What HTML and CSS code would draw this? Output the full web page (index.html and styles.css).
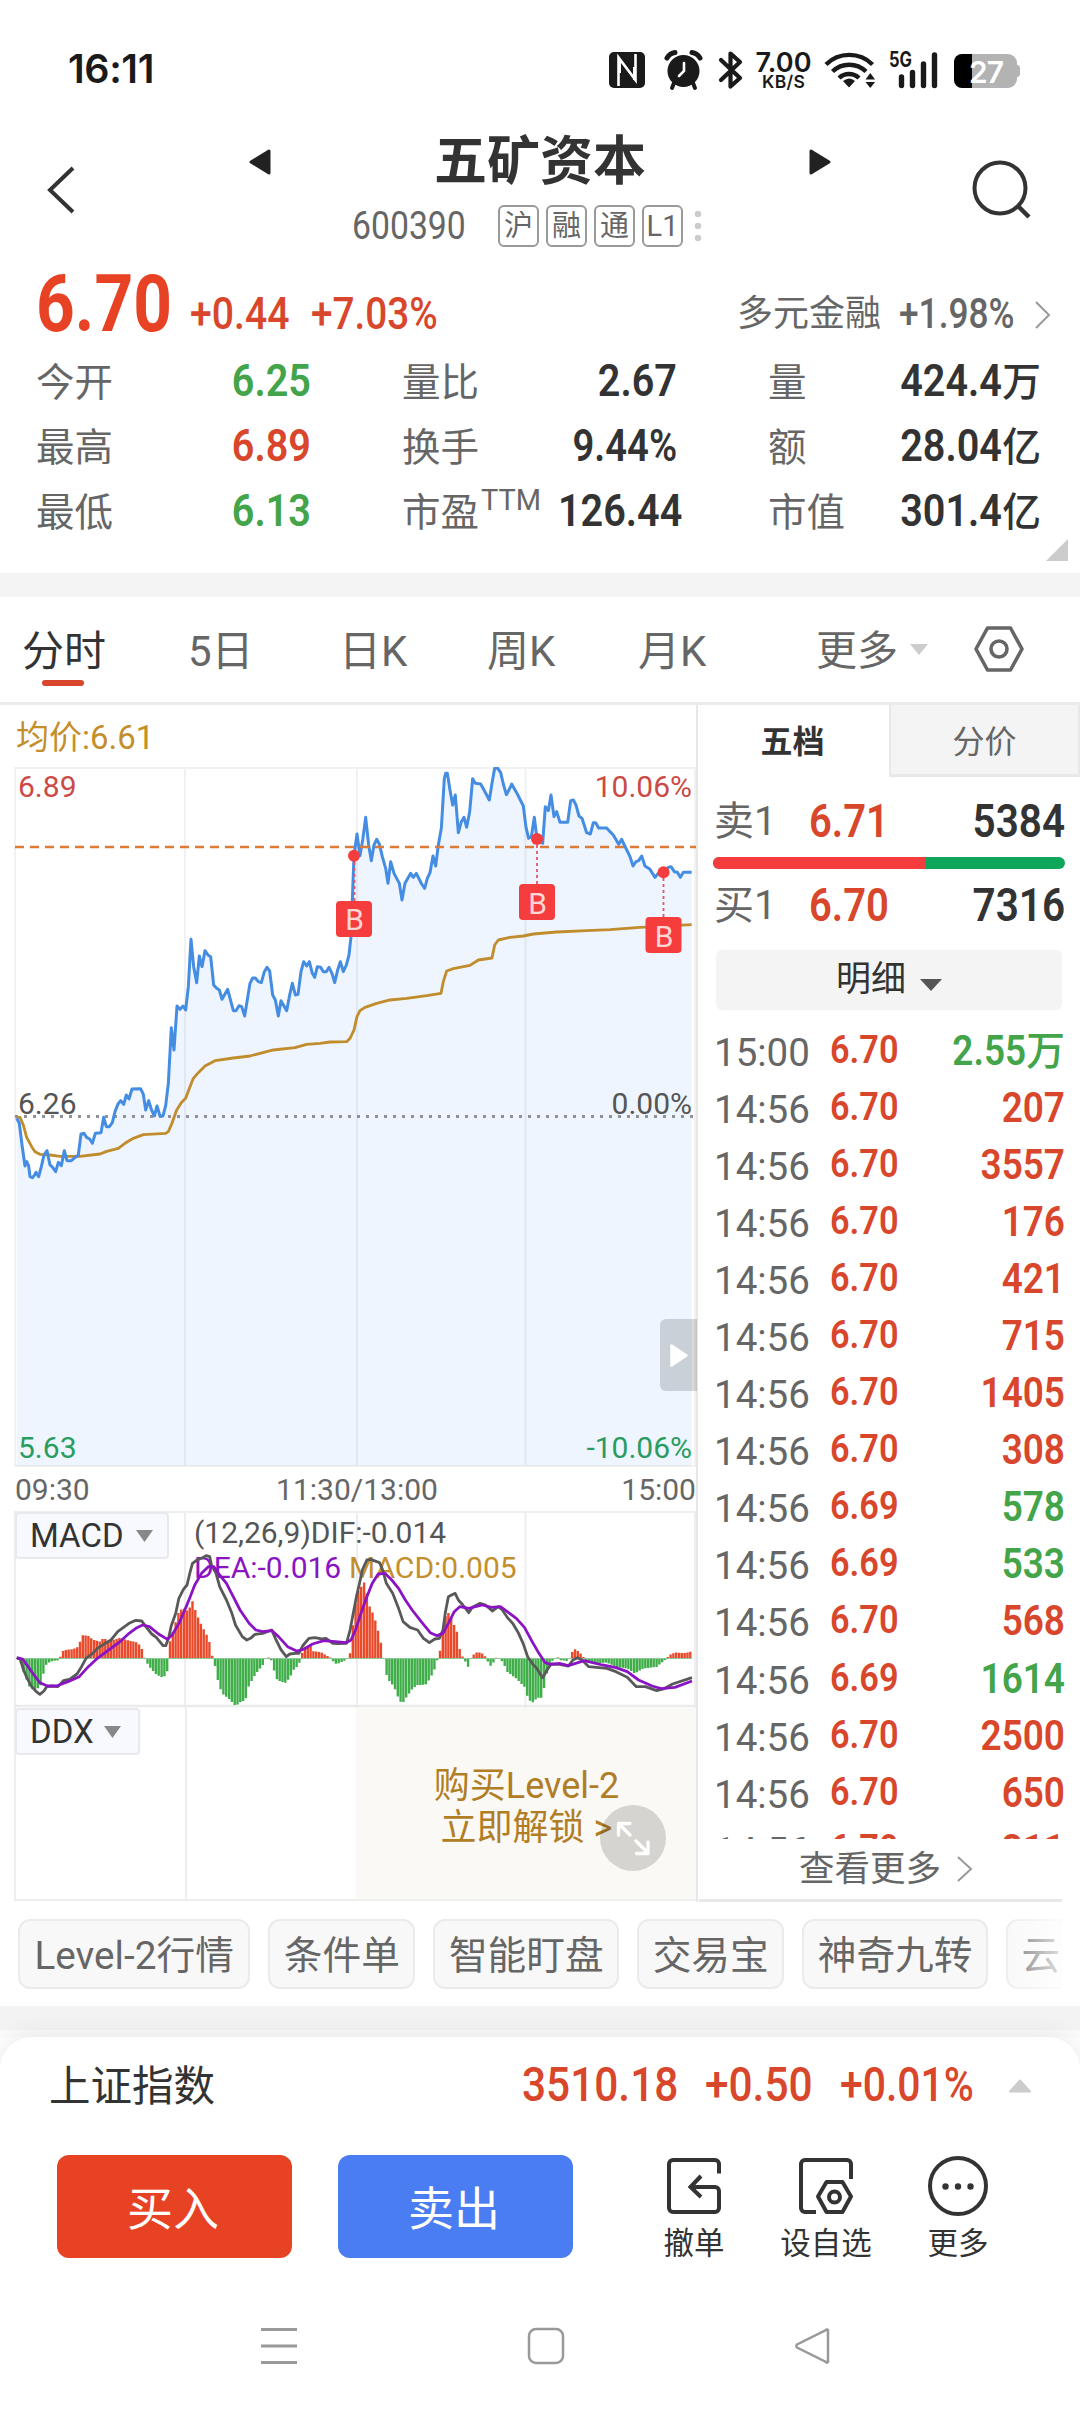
FILE: index.html
```html
<!DOCTYPE html>
<html lang="zh-CN">
<head>
<meta charset="utf-8">
<title>五矿资本 600390</title>
<link rel="stylesheet" href="styles.css">
</head>
<body>
<div class="status">
  <span class="clock">16:11</span>
  <svg class="status-icons" width="420" height="44" viewBox="605 48 420 44">
    <rect x="609" y="52" width="36" height="36" rx="5" fill="#1a1a1a"/>
    <path d="M618.500 86V57.500l17 22.500V54" fill="none" stroke="#fff" stroke-width="2.600"/>
    <path d="M620 60v13M634 67v13" stroke="#fff" stroke-width="2"/>
    <circle cx="683.500" cy="71" r="16" fill="#1a1a1a"/>
    <path d="M667 58q3-5 8-5.500M700 58q-3-5-8-5.500" fill="none" stroke="#1a1a1a" stroke-width="5" stroke-linecap="round"/>
    <path d="M674 83l-2 5M693 83l2 5" stroke="#1a1a1a" stroke-width="4" stroke-linecap="round"/>
    <path d="M684 63v8l-5 5" fill="none" stroke="#fff" stroke-width="2.600" stroke-linecap="round"/>
    <path d="M721 60l19 18-9.500 8.500V53.500L740 62l-19 18" fill="none" stroke="#1a1a1a" stroke-width="4.200" stroke-linejoin="round" stroke-linecap="round"/>
    <text x="755.500" y="71.500" class="net-speed" textLength="56">7.00</text>
    <text x="762" y="88" class="net-unit" textLength="43">KB/S</text>
    <g fill="none" stroke="#1a1a1a" stroke-width="4.400">
      <path d="M826 64.500a33 33 0 0 1 46.500 0"/>
      <path d="M832.500 71.500a24 24 0 0 1 33.500 0"/>
      <path d="M839 78a14.500 14.500 0 0 1 20 0"/>
    </g>
    <path d="M843 81q6.500-5 12 0l-6 6.500z" fill="#1a1a1a"/>
    <path d="M865.500 79.500l4.800-6.500 4.800 6.500zM865.500 82l4.800 6 4.800-6z" fill="#1a1a1a"/>
    <text x="889" y="67" class="net-gen" textLength="23" lengthAdjust="spacingAndGlyphs">5G</text>
    <g stroke="#1a1a1a" stroke-width="5.400" stroke-linecap="round">
      <path d="M901.500 77v8.500M912.500 72.500v13M923.500 64v21.500M934.500 55v30.500"/>
    </g>
    <rect x="954" y="54" width="63" height="34" rx="9" fill="#b3b3b3"/>
    <rect x="1014" y="65" width="6" height="12" rx="3" fill="#b3b3b3"/>
    <path d="M972 54h-10a8 8 0 0 0-8 8v18a8 8 0 0 0 8 8h10z" fill="#000"/>
    <text x="969" y="82.500" class="batt" textLength="35">27</text>
  </svg>
</div>

<header class="header">
  <svg class="back" width="34" height="54" viewBox="0 0 34 54"><path d="M28 5L5 27l23 22" fill="none" stroke="#333" stroke-width="4"/></svg>
  <div class="title-block">
    <div class="title-row">
      <svg width="22" height="26" viewBox="0 0 22 26"><path d="M20 2v22L2 13z" fill="#222" stroke="#222" stroke-width="3" stroke-linejoin="round"/></svg>
      <h1>五矿资本</h1>
      <svg width="22" height="26" viewBox="0 0 22 26"><path d="M2 2v22l18-11z" fill="#222" stroke="#222" stroke-width="3" stroke-linejoin="round"/></svg>
    </div>
    <div class="code-row">
      <span class="code"><span class="din left">600390</span></span>
      <span class="tag">沪</span><span class="tag">融</span><span class="tag">通</span><span class="tag">L1</span>
      <svg width="8" height="32" viewBox="0 0 8 32" fill="#ccc"><circle cx="4" cy="4" r="3.200"/><circle cx="4" cy="16" r="3.200"/><circle cx="4" cy="28" r="3.200"/></svg>
    </div>
  </div>
  <svg class="search" width="62" height="62" viewBox="0 0 62 62"><circle cx="29" cy="29" r="25.500" fill="none" stroke="#333" stroke-width="4"/><path d="M47 47l11 11" stroke="#333" stroke-width="4.500"/></svg>
</header>

<section class="quote">
  <div class="price-row">
    <span class="price red"><span class="din left">6.70</span></span>
    <span class="chg red"><span class="din left">+0.44</span></span>
    <span class="pct red"><span class="din left">+7.03%</span></span>
    <span class="sector">多元金融</span>
    <span class="sector-pct"><span class="din right">+1.98%</span></span>
    <svg class="more" width="16" height="28" viewBox="0 0 16 28"><path d="M1 1l13 13L1 27" fill="none" stroke="#999" stroke-width="2"/></svg>
  </div>
  <div class="stats">
    <div class="stat"><span>今开</span><b class="green din right">6.25</b></div>
    <div class="stat"><span>量比</span><b class="din right">2.67</b></div>
    <div class="stat"><span>量</span><b class="din right">424.4<i>万</i></b></div>
    <div class="stat"><span>最高</span><b class="red din right">6.89</b></div>
    <div class="stat"><span>换手</span><b class="din right tight">9.44%</b></div>
    <div class="stat"><span>额</span><b class="din right">28.04<i>亿</i></b></div>
    <div class="stat"><span>最低</span><b class="green din right">6.13</b></div>
    <div class="stat"><span>市盈<sup>TTM</sup></span><b class="din right">126.44</b></div>
    <div class="stat"><span>市值</span><b class="din right">301.4<i>亿</i></b></div>
  </div>
  <svg class="corner" width="22" height="22" viewBox="0 0 22 22"><path d="M22 0v22H0z" fill="#ccc"/></svg>
</section>

<nav class="periods">
  <span class="on">分时</span><span>5日</span><span>日K</span><span>周K</span><span>月K</span><span class="menu">更多</span>
  <svg class="caret" width="18" height="12" viewBox="0 0 18 12"><path d="M0 0h18L9 11z" fill="#ccc"/></svg>
  <svg class="gear" width="50" height="48" viewBox="0 0 50 48" fill="none" stroke="#666" stroke-width="3.600"><path d="M13.500 3h23L48 24 36.500 45h-23L2 24z" stroke-linejoin="round"/><circle cx="25" cy="24" r="8"/></svg>
</nav>

<main class="board">
  <div class="charts">
    <div class="avg">均价:6.61</div>
    <svg class="price-chart" width="697" height="700" viewBox="0 767 697 700">
      <g transform="translate(0 740) scale(.33333)">
        <path id="area" fill="#eef5fe" d=""/>
      </g>
      <g fill="none" stroke="#000" stroke-opacity=".055" stroke-width="2">
        <path d="M15 768H695V1466H15zM185 768V1466M357 768V1466M525.500 768V1466"/>
      </g>
      <path d="M15 1116.500H694" stroke="#8e9298" stroke-width="3" stroke-dasharray="3 6"/>
      <g transform="translate(0 740) scale(.33333)" fill="none" stroke-linejoin="round">
        <polyline stroke="#c18c2c" stroke-width="8.500" points="50,1132 60,1132 70,1155 80,1192 95,1220 105,1235 120,1243 150,1245 180,1249 240,1249 300,1242 320,1234 355,1225 375,1210 400,1195 430,1184 497,1180 505,1175 515,1152 530,1110 545,1087 557,1075 570,1040 580,1015 595,998 615,978 645,962 700,954 750,948 780,940 820,930 885,923 920,913 960,910 990,906 1040,905 1050,895 1062,870 1071,830 1080,812 1095,802 1130,790 1170,780 1220,775 1280,767 1323,760 1330,725 1340,693 1360,686 1410,676 1435,660 1476,654 1484,615 1495,600 1530,592 1570,588 1600,582 1670,576 1760,572 1830,569 1920,562 2075,554"/>
        <polyline id="line" stroke="#458de3" stroke-width="9" points="50,1135 58,1150 66,1215 75,1278 80,1265 86,1278 90,1310 97,1313 104,1305 108,1297 116,1310 124,1280 132,1245 141,1232 150,1275 158,1282 167,1295 175,1267 184,1277 193,1232 201,1262 214,1262 222,1255 235,1245 243,1182 252,1180 260,1192 269,1197 277,1210 286,1180 303,1178 311,1132 319,1160 328,1160 337,1148 345,1115 354,1092 362,1082 371,1093 379,1065 387,1077 396,1047 422,1046 430,1063 437,1110 446,1082 454,1108 463,1128 471,1098 480,1128 489,1128 497,1097 505,1030 514,863 522,930 531,798 540,808 549,798 557,810 565,740 573,598 581,680 590,728 598,648 606,680 615,632 624,645 632,650 641,735 650,745 658,750 666,778 683,748 700,812 708,812 717,797 725,800 734,828 750,730 758,714 766,714 775,725 784,728 793,695 801,682 809,693 818,765 826,780 835,828 843,782 860,812 869,765 877,730 886,765 894,763 903,695 911,665 920,678 928,665 937,700 944,712 952,680 962,682 970,695 979,695 987,682 996,700 1004,728 1013,690 1021,665 1030,695 1039,675 1047,645 1053,590 1060,400 1062,347 1071,282 1080,347 1088,300 1097,232 1106,315 1114,362 1122,315 1130,298 1138,312 1147,350 1157,385 1164,430 1172,365 1182,400 1198,430 1206,480 1215,430 1232,400 1240,412 1249,400 1265,432 1274,445 1282,415 1290,398 1299,348 1307,378 1315,315 1324,265 1333,115 1337,100 1342,100 1350,150 1358,195 1366,165 1375,278 1384,245 1392,232 1400,262 1409,215 1418,116 1426,130 1442,132 1452,150 1468,180 1476,130 1484,85 1492,83 1502,98 1510,132 1519,164 1527,150 1535,132 1552,162 1561,180 1570,198 1578,262 1586,295 1594,290 1603,232 1611,297 1628,310 1636,200 1645,212 1653,165 1662,230 1670,215 1680,247 1703,247 1712,182 1720,180 1728,195 1737,228 1746,235 1760,278 1771,282 1780,248 1787,248 1796,264 1820,264 1830,275 1840,285 1856,313 1865,298 1873,315 1890,350 1899,378 1908,365 1916,362 1925,348 1935,378 1950,388 1965,412 1975,400 1990,397 2005,382 2013,380 2023,395 2032,397 2041,412 2050,397 2075,397"/>
      </g>
      <path d="M15 847H696" stroke="#dd7a35" stroke-width="2.400" stroke-dasharray="9 6"/>
      <g stroke="#e0566a" stroke-dasharray="3 3" stroke-width="1.800"><path d="M354.500 862V901"/><path d="M537 845V884M663.500 878V917"/></g>
      <g fill="#f53d3d"><circle cx="354" cy="855.700" r="6"/><circle cx="537" cy="839" r="6"/><circle cx="663.500" cy="872.300" r="6"/>
        <rect x="336" y="901" width="36" height="36" rx="4"/><rect x="519" y="884" width="36" height="36" rx="4"/><rect x="645.500" y="917" width="36" height="36" rx="4"/></g>
      <g class="mark"><text x="354.500" y="930">B</text><text x="537.500" y="913.500">B</text><text x="664" y="946.500">B</text></g>
      <g class="axis">
        <text x="18" y="797" fill="#cb4a45">6.89</text><text x="692" y="797" fill="#cb4a45" class="end">10.06%</text>
        <text x="18" y="1113.500" fill="#555">6.26</text><text x="692" y="1113.500" fill="#555" class="end">0.00%</text>
        <text x="18" y="1457.500" fill="#2a9c60">5.63</text><text x="692" y="1457.500" fill="#2a9c60" class="end">-10.06%</text>
      </g>
      <path d="M697 1319h-31a6 6 0 0 0-6 6v60a6 6 0 0 0 6 6h31z" fill="#000" fill-opacity=".15"/>
      <path d="M671.500 1345.500v20l15-10z" fill="#fff" stroke="#fff" stroke-width="2.500" stroke-linejoin="round"/>
    </svg>
    <div class="times"><span>09:30</span><span>11:30/13:00</span><span>15:00</span></div>
    <div class="sub">
      <svg width="697" height="197" viewBox="0 1511 697 197">
        <path d="M15 1708V1512H695V1708M185 1512V1708M357 1512V1708M525.500 1512V1708" fill="none" stroke="#eee" stroke-width="2"/>
        <path d="M15 1706H696" stroke="#ebebeb" stroke-width="2.500"/>
        <g id="bars"></g>
        <path d="M16 1658.500H692" stroke="#8fc99a" stroke-width="1"/>
        <g class="axis"><text x="194" y="1542.500" fill="#555">(12,26,9)DIF:-0.014</text><text x="194" y="1577.500" fill="#8a14c4">DEA:-0.016</text><text x="349" y="1577.500" fill="#c48e2c">MACD:0.005</text></g>
        <g class="curves" transform="translate(0 1490) scale(.4529 .33333)">
          <polyline stroke="#595959" points="37,503 45,508 52,540 60,565 70,590 80,605 88,613 97,603 103,590 115,588 128,590 140,572 155,567 170,552 180,530 190,505 205,490 215,475 230,462 245,450 260,425 275,410 285,400 300,391 313,393 322,410 335,432 345,442 360,467 366,467 373,440 378,408 388,370 395,325 405,298 413,285 420,245 425,220 435,210 448,203 455,197 463,200 467,225 477,250 485,290 500,330 512,370 520,405 535,440 545,450 553,445 563,433 580,430 590,425 600,420 608,445 620,478 632,500 640,492 652,490 660,490 668,468 682,445 695,443 710,447 720,445 735,460 745,461 765,460 773,420 780,370 787,320 793,285 800,240 810,210 818,208 838,218 845,240 853,280 867,310 880,355 890,395 905,412 922,420 935,445 948,458 960,447 970,445 978,420 983,370 990,320 998,314 1005,310 1012,330 1022,345 1035,368 1043,352 1060,340 1072,345 1087,363 1100,350 1108,358 1120,382 1132,400 1145,430 1155,460 1165,500 1175,520 1185,535 1198,563 1208,540 1217,522 1235,523 1255,528 1265,510 1275,503 1285,510 1300,530 1340,535 1360,545 1385,562 1405,590 1425,590 1450,602 1465,597 1485,582 1528,563"/>
          <polyline stroke="#8a14c4" points="37,503 50,507 62,530 75,555 88,578 105,588 125,588 150,575 175,560 195,530 215,505 240,480 265,455 285,430 300,415 315,405 330,410 350,432 370,448 380,435 395,400 408,360 420,320 430,285 445,250 460,230 472,230 485,255 500,280 515,320 530,360 550,400 565,420 580,425 600,422 615,440 635,470 655,483 670,478 690,462 715,452 740,455 765,458 775,450 785,420 797,370 810,320 822,280 835,252 850,250 865,270 880,295 895,330 910,360 930,395 950,428 965,437 978,430 990,400 1003,365 1015,350 1035,355 1065,345 1085,352 1105,350 1120,365 1140,385 1158,412 1175,455 1190,490 1203,517 1215,523 1235,520 1255,527 1290,512 1330,525 1360,533 1385,545 1410,570 1440,588 1460,596 1490,592 1528,573"/>
        </g>
      </svg>
      <button class="pick macd">MACD<svg width="17" height="12" viewBox="0 0 17 12"><path d="M0 0h17L8.500 12z" fill="#888"/></svg></button>
    </div>
    <div class="sub ddx-pane">
      <div class="lock">购买Level-2<br>立即解锁 &gt;</div>
      <button class="pick ddx">DDX<svg width="17" height="12" viewBox="0 0 17 12"><path d="M0 0h17L8.500 12z" fill="#888"/></svg></button>
      <svg class="expand" width="66" height="66" viewBox="0 0 66 66"><circle cx="33" cy="33" r="33" fill="#000" fill-opacity=".15"/><path d="M18.500 30V18.500H30M19 19l11 11M48 37v11.500H36.500M36 36l12 12" fill="none" stroke="#fff" stroke-width="3.400" stroke-linecap="round" stroke-linejoin="round"/></svg>
    </div>
  </div>

  <aside class="depth">
    <div class="depth-tabs"><b>五档</b><span>分价</span></div>
    <div class="level ask"><span>卖1</span><b class="din left red">6.71</b><b class="din right">5384</b></div>
    <div class="ratio"><i></i></div>
    <div class="level bid"><span>买1</span><b class="din left red">6.70</b><b class="din right">7316</b></div>
    <div class="detail">明细<svg width="22" height="12" viewBox="0 0 22 12"><path d="M0 0h22L11 12z" fill="#555"/></svg></div>
    <div class="ticks">
      <div><span>15:00</span><b class="din left red">6.70</b><em class="din right green">2.55<i>万</i></em></div>
      <div><span>14:56</span><b class="din left red">6.70</b><em class="din right red">207</em></div>
      <div><span>14:56</span><b class="din left red">6.70</b><em class="din right red">3557</em></div>
      <div><span>14:56</span><b class="din left red">6.70</b><em class="din right red">176</em></div>
      <div><span>14:56</span><b class="din left red">6.70</b><em class="din right red">421</em></div>
      <div><span>14:56</span><b class="din left red">6.70</b><em class="din right red">715</em></div>
      <div><span>14:56</span><b class="din left red">6.70</b><em class="din right red">1405</em></div>
      <div><span>14:56</span><b class="din left red">6.70</b><em class="din right red">308</em></div>
      <div><span>14:56</span><b class="din left red">6.69</b><em class="din right green">578</em></div>
      <div><span>14:56</span><b class="din left red">6.69</b><em class="din right green">533</em></div>
      <div><span>14:56</span><b class="din left red">6.70</b><em class="din right red">568</em></div>
      <div><span>14:56</span><b class="din left red">6.69</b><em class="din right green">1614</em></div>
      <div><span>14:56</span><b class="din left red">6.70</b><em class="din right red">2500</em></div>
      <div><span>14:56</span><b class="din left red">6.70</b><em class="din right red">650</em></div>
      <div><span>14:56</span><b class="din left red">6.70</b><em class="din right red">311</em></div>
    </div>
    <div class="see-more">查看更多<svg width="16" height="26" viewBox="0 0 16 26"><path d="M1 1l13 12L1 25" fill="none" stroke="#999" stroke-width="2"/></svg></div>
  </aside>
</main>

<div class="chips"><span>Level-2行情</span><span>条件单</span><span>智能盯盘</span><span>交易宝</span><span>神奇九转</span><span>云参数</span></div>
<div class="band"></div>

<footer class="sheet">
  <div class="index">
    <span class="name">上证指数</span>
    <span class="v1"><span class="din left">3510.18</span></span><span class="v2"><span class="din left">+0.50</span></span><span class="v3"><span class="din left">+0.01%</span></span>
    <svg width="24" height="14" viewBox="0 0 24 14"><path d="M12 1.500L22 12.500H2z" fill="#ccc" stroke="#ccc" stroke-width="2" stroke-linejoin="round"/></svg>
  </div>
  <div class="actions">
    <button class="buy">买入</button><button class="sell">卖出</button>
    <div class="act"><svg width="60" height="62" viewBox="0 0 60 62" fill="none" stroke="#333" stroke-width="4"><path d="M55 18.500V9a4 4 0 0 0-4-4H9a4 4 0 0 0-4 4v44a4 4 0 0 0 4 4h42a4 4 0 0 0 4-4V36a4 4 0 0 0-4-4H28M37 21L26.500 32 37 42"/></svg>撤单</div>
    <div class="act"><svg width="60" height="62" viewBox="0 0 60 62" fill="none" stroke="#333" stroke-width="4"><path d="M55 24V9a4 4 0 0 0-4-4H9a4 4 0 0 0-4 4v44a4 4 0 0 0 4 4h11"/><path d="M30.500 27h16L55 41.500 46.500 57h-16L22 41.500z" stroke-linejoin="round"/><circle cx="38.500" cy="42" r="5.500"/></svg>设自选</div>
    <div class="act"><svg width="62" height="62" viewBox="0 0 62 62"><circle cx="31" cy="31" r="28" fill="none" stroke="#333" stroke-width="4"/><g fill="#333"><circle cx="18.500" cy="31.500" r="3.200"/><circle cx="31" cy="31.500" r="3.200"/><circle cx="43.500" cy="31.500" r="3.200"/></g></svg>更多</div>
  </div>
  <div class="sysnav">
    <svg width="38" height="38" viewBox="0 0 38 38"><path d="M1 2.500h36M1 19h36M1 35.500h36" stroke="#999" stroke-width="3"/></svg>
    <svg width="38" height="38" viewBox="0 0 38 38"><rect x="2" y="2" width="34" height="34" rx="7" fill="none" stroke="#999" stroke-width="2.500"/></svg>
    <svg width="38" height="38" viewBox="0 0 38 38"><path d="M34 4v30a1 1 0 0 1-2 1L3 20.500a2 2 0 0 1 0-3L32 3a1 1 0 0 1 2 1z" fill="none" stroke="#999" stroke-width="2.500"/></svg>
  </div>
</footer>
<script src="chart.js"></script>
</body>
</html>
```
FILE: styles.css
```css
* { box-sizing: border-box; }
body { margin: 0; width: 1080px; height: 2412px; overflow: hidden; background: #fff; color: #333; font-family: Roboto, "Noto Sans CJK SC", sans-serif; }
svg { display: block; flex: none; }
b, em, i { font-style: normal; }
button { font: inherit; }
.din { display: inline-block; font-weight: 600; transform: scaleX(.88); white-space: nowrap; }
.din.left { transform-origin: 0 50%; }
.din.right { transform-origin: 100% 50%; }
.din.tight { transform: scaleX(.85); }
.din i { display: inline-block; font-weight: 500; font-size: 40px; transform: scaleX(1.1); transform-origin: 100% 50%; margin-left: 4px; }
.red { color: #d8462b; }
.green { color: #43a44a; }

.status { height: 110px; padding: 30px 55px 0 68px; display: flex; align-items: center; justify-content: space-between; }
.clock { font: 600 39.500px/1 Inter, sans-serif; color: #1a1a1a; letter-spacing: -.4px; }
.status-icons { overflow: visible; }
.status-icons text { font-family: Inter, sans-serif; font-weight: 600; fill: #1a1a1a; }
.status-icons .net-speed { font-size: 27px; }
.status-icons .net-unit { font-size: 17.500px; }
.status-icons .net-gen { font-size: 21px; font-weight: 700; }
.status-icons .batt { font-size: 30px; fill: #fff; }

.header { height: 137px; display: grid; grid-template-columns: 249px 582px 1fr; }
.back { margin: 53px 0 0 45px; }
.title-row { height: 95px; display: flex; align-items: center; justify-content: space-between; padding-top: 8px; }
h1 { margin: 0; font-size: 53px; line-height: 60px; font-weight: 700; }
.code-row { height: 42px; padding-left: 103px; display: flex; align-items: center; gap: 7px; }
.code { width: 139px; font-size: 39px; line-height: 42px; color: #666; }
.code .din { font-weight: 400; transform: scaleX(.865); }
.tag { width: 41px; height: 42px; border: 2px solid #999; border-radius: 6px; font-size: 29px; line-height: 38px; text-align: center; color: #666; }
.code-row svg { margin-left: 4px; }
.search { margin: 49px 0 0 140px; }

.quote { height: 350px; position: relative; border-bottom: 24px solid #f4f4f4; }
.price-row { height: 102px; padding-left: 36px; display: flex; line-height: 50px; padding-top: 42px; white-space: nowrap; }
.price { width: 154px; font-size: 80px; margin-top: -10px; }
.price .din { font-weight: 700; color: #e84224; transform: scaleX(.845); }
.chg { width: 121px; font-size: 44.500px; }
.pct { width: 426px; font-size: 44.500px; }
.chg .din { font-weight: 500; }
.pct .din { font-weight: 500; transform: scaleX(.87); }
.sector { width: 146px; font-size: 36px; color: #666; }
.sector-pct { width: 132px; display: flex; justify-content: flex-end; font-size: 42px; color: #666; }
.sector-pct .din { font-weight: 500; transform: scaleX(.84); }
.more { margin: 12px 0 0 20px; }
.stats { padding-left: 36px; display: grid; grid-template-columns: 275px 275px 273px; column-gap: 91px; grid-auto-rows: 65px; line-height: 68px; }
.stat { display: flex; justify-content: space-between; font-size: 38.500px; color: #666; white-space: nowrap; }
.stat b { font-size: 45px; line-height: 64px; color: #333; }
.stat b.red { color: #d8462b; }
.stat b.green { color: #43a44a; }
.stat sup { font-size: 29px; line-height: 0; vertical-align: 16px; margin-left: 2px; }
.corner { position: absolute; right: 12px; bottom: 12px; }

.periods { height: 108px; padding: 0 0 3px 22px; border-bottom: 3px solid #ebebeb; display: flex; align-items: center; font-size: 42px; line-height: 111px; color: #666; }
.periods span { width: 148px; height: 105px; position: relative; }
.periods span:nth-child(1) { width: 166px; }
.periods span:nth-child(2) { width: 151px; }
.periods span:nth-child(4) { width: 151px; }
.periods span:nth-child(5) { width: 178px; }
.periods span.menu { width: 94px; font-size: 41px; }
.periods .on { color: #333; }
.periods .on::after { content: ""; position: absolute; left: 20px; top: 84px; width: 42px; height: 6px; border-radius: 3px; background: #d8462b; }
.caret { margin-top: 3px; }
.gear { margin: 1px 0 0 46px; }

.board { display: flex; height: 1197px; }
.charts { width: 698px; border-right: 2px solid #e8e8e8; }
.avg { height: 62px; padding-left: 16px; font-size: 33px; line-height: 65px; color: #c48e2c; }
.axis text, .mark text { font-family: Roboto, sans-serif; font-size: 30px; }
.axis .end { text-anchor: end; }
.mark text { font-size: 30px; fill: #ffd5d5; text-anchor: middle; }
.times { height: 44px; padding: 0 0 0 15px; display: flex; justify-content: space-between; font-size: 30px; line-height: 46px; color: #666; }
.times span:nth-child(2) { margin-left: 3px; }
.sub { position: relative; height: 197px; }
.sub > svg { max-width: none; }
.curves polyline { fill: none; stroke-width: 2.800px; vector-effect: non-scaling-stroke; stroke-linejoin: round; }
.pick { position: absolute; left: 15px; top: 1px; height: 47px; padding: 0 0 0 13px; background: #f8f9fe; border: 2px solid #e8e9ec; border-radius: 4px; display: flex; align-items: center; gap: 12px; font-size: 33px; color: #333; }
.macd { width: 154px; }
.ddx { width: 125px; gap: 10px; top: 0; }
.ddx-pane { height: 193px; border: 2px solid #eee; border-width: 0 0 2px 2px; margin-left: 14px; background: linear-gradient(90deg, transparent 169px, #eee 169px, #eee 171px, transparent 171px); }
.ddx-pane .pick { left: -1px; }
.lock { margin-left: 340px; height: 191px; padding: 57px 0 0 1px; background: #fbf9f5; color: #b17d25; font-size: 36px; line-height: 42px; text-align: center; }
.expand { position: absolute; left: 584px; top: 97px; }

.depth { flex: 1; padding-left: 1px; }
.depth-tabs { height: 72px; display: flex; font-size: 32px; line-height: 74px; text-align: center; }
.depth-tabs b { width: 190px; padding-right: 3px; }
.depth-tabs span { flex: 1; background: #f4f4f4; border: 2px solid #e8e8e8; border-width: 0 2px 3px; color: #666; }
.level { height: 66px; margin: 0 15px; display: grid; grid-template-columns: 95px 1fr auto; line-height: 67px; font-size: 40px; color: #666; }
.level b { font-size: 46px; color: #333; }
.level b.red { color: #d8462b; transform: scaleX(.87); }
.ask { margin-top: 11px; }
.ratio { height: 12px; margin: 3px 15px 0 14px; border-radius: 6px; overflow: hidden; background: #0ea65b; }
.ratio i { display: block; width: 60.300%; height: 12px; background: #f53d3d; }
.bid { margin-top: 3px; }
.detail { height: 60px; margin: 12px 18px 0 17px; border-radius: 6px; background: #f4f4f4; display: flex; align-items: center; justify-content: center; gap: 14px; font-size: 35px; line-height: 66px; }
.detail svg { margin-top: 10px; }
.ticks { height: 829px; margin: 0 15px; overflow: hidden; padding-top: 11px; }
.ticks div { height: 57.050px; line-height: 57.050px; display: grid; grid-template-columns: 116px 1fr auto; font-size: 38.500px; color: #666; }
.ticks span { padding-top: 3px; }
.ticks b { font-size: 39px; padding-top: 1px; }
.ticks em { font-size: 42px; padding-top: 1px; }
.ticks i { font-size: 40px; }
.see-more { height: 63px; margin-right: 18px; border-bottom: 3px solid #e8e8e8; display: flex; align-items: center; justify-content: center; gap: 16px; padding-left: 11px; font-size: 35.500px; line-height: 64px; color: #666; }

.chips { height: 104px; width: 1062px; padding: 17px 0 0 18px; display: flex; gap: 18px; overflow: hidden; position: relative; }
.chips span { flex: none; height: 70px; padding: 0 13.500px; border: 2px solid #ebebeb; border-radius: 12px; background: #f8f8f8; font-size: 38.700px; line-height: 69px; color: #666; }
.chips span:first-child { padding: 0 14.500px; }
.chips::after { content: ""; position: absolute; right: 0; top: 0; width: 70px; height: 104px; background: linear-gradient(90deg, #fff0, #fffc); }
.band { height: 31px; background: #f3f3f3; border-bottom: 7px solid #fbfbfb; }

.sheet { height: 375px; background: #fff; border-radius: 32px 32px 0 0; box-shadow: 0 0 24px rgba(0, 0, 0, .1); position: relative; }
.index { height: 98px; padding-left: 49px; display: flex; align-items: center; font-size: 41.500px; line-height: 100px; }
.index .name { width: 473px; padding-top: 1px; }
.index .din { font-weight: 500; font-size: 49px; color: #d8462b; transform: scaleX(.865); }
.index .v3 .din { transform: scaleX(.835); }
.v1 { width: 183px; } .v2 { width: 135px; } .v3 { width: 168px; }
.actions { height: 140px; padding: 20px 0 0 57px; display: flex; }
.actions button { width: 235px; height: 103px; margin-right: 46px; padding: 0 3px 3px 0; border: 0; border-radius: 12px; color: #fff; font-size: 46px; }
.buy { background: #e84224; }
.sell { background: #4b7df2; }
.act { width: 132px; display: flex; flex-direction: column; align-items: center; font-size: 30.500px; line-height: 54px; }
.sell + .act { margin-left: 9px; }
.sysnav { display: flex; justify-content: space-between; padding: 52px 248px 0 260px; }
```
FILE: chart.js
```js
// Closes the price line down to the chart floor for the tinted area.
const pts = document.getElementById("line").getAttribute("points");
document.getElementById("area").setAttribute("d", "M50,2177 L" + pts + " L2075,2177 Z");

// MACD histogram: [x, height] knots, positive above the zero line.
const knots = [
  [37,0],[45,-10],[55,-50],[65,-85],[78,-97],[90,-80],[96,-45],[103,-15],[115,-8],[127,-6],[129,5],[135,5],[140,25],[160,28],[170,33],[175,45],[183,70],[195,68],[205,57],[222,50],[228,62],[240,52],[265,62],[280,55],[300,50],[310,38],[318,15],[320,-3],[330,-25],[345,-48],[360,-58],[368,-45],[373,-15],[375,50],[385,95],[393,135],[403,152],[415,142],[425,172],[435,130],[445,100],[455,75],[465,40],[468,10],[471,-2],[476,-30],[480,-60],[490,-105],[505,-120],[520,-142],[532,-130],[542,-125],[550,-80],[565,-45],[580,-20],[585,-3],[588,3],[598,3],[600,-15],[612,-65],[630,-73],[640,-58],[650,-30],[660,-20],[663,2],[668,20],[672,35],[685,40],[692,22],[710,18],[727,4],[733,1],[738,-17],[748,-14],[765,-4],[768,3],[772,5],[776,60],[782,140],[790,200],[805,230],[815,160],[825,130],[832,100],[838,65],[845,25],[848,-10],[855,-60],[870,-85],[880,-120],[888,-137],[898,-115],[908,-95],[920,-80],[940,-78],[950,-60],[960,-30],[967,3],[973,30],[978,80],[985,135],[993,138],[1000,105],[1008,90],[1012,40],[1020,10],[1023,0],[1028,-10],[1030,-25],[1037,-25],[1040,3],[1050,18],[1062,18],[1072,5],[1075,-5],[1083,-22],[1092,-8],[1096,3],[1101,3],[1105,-3],[1112,-15],[1120,-40],[1140,-60],[1158,-85],[1167,-125],[1178,-132],[1185,-118],[1198,-118],[1205,-55],[1215,-15],[1222,-3],[1232,3],[1238,-5],[1255,-8],[1260,15],[1270,28],[1280,18],[1288,5],[1292,-5],[1310,-15],[1340,-12],[1360,-25],[1385,-30],[1402,-45],[1420,-30],[1450,-25],[1465,-8],[1472,0],[1478,10],[1490,18],[1510,16],[1531,22]
];
const zero = 1658.5;
let up = "", down = "", k = 0;
for (let i = 0; i < 240; i++) {
  const x = 40 + i * 6.21;
  while (k < knots.length - 2 && knots[k + 1][0] < x) k++;
  const [x0, h0] = knots[k], [x1, h1] = knots[k + 1];
  const h = (h0 + (h1 - h0) * (x - x0) / (x1 - x0)) / 3;
  const seg = `M${(x * 0.4529).toFixed(1)} ${zero}V${(zero - h).toFixed(1)}`;
  if (h > 0) up += seg; else down += seg;
}
document.getElementById("bars").innerHTML =
  `<path d="${up}" stroke="#e84a2a" stroke-width="2.4"/><path d="${down}" stroke="#3fae49" stroke-width="2.4"/>`;
```
